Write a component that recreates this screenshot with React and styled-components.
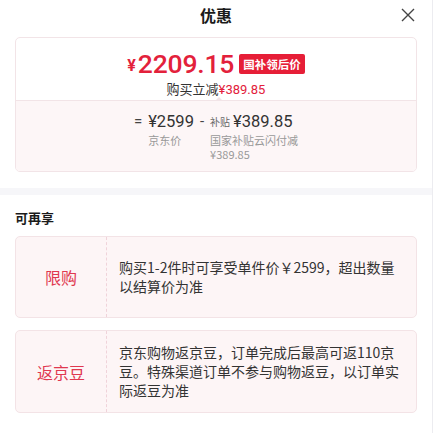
import React from 'react'
import styled, { createGlobalStyle } from 'styled-components'

const Global = createGlobalStyle`
  body {
    margin: 0;
    background: #fff;
    font-family: "Noto Sans CJK SC", "Noto Sans", sans-serif;
    color: #333;
  }
`

const Page = styled.div`
  width: 432px;
  height: 433px;
  border-right: 1px solid #ececf0;
  overflow: hidden;
`

const Header = styled.div`
  height: 30px;
  display: flex;
  align-items: center;
  justify-content: center;
  position: relative;
  font-size: 16px;
  font-weight: 700;
  color: #1a1a1a;
`

const Close = styled.div`
  position: absolute;
  right: 17px;
  top: 8px;
  width: 14px;
  height: 14px;
  display: flex;
`

const PriceCard = styled.div`
  margin: 7px 15px 0;
  border: 1px solid #f2e4e7;
  border-radius: 5px;
  overflow: hidden;
`

const Top = styled.div`
  height: 63px;
  display: flex;
  flex-direction: column;
  align-items: center;
  padding-top: 10px;
  box-sizing: border-box;
  border-bottom: 1px solid #f2e4e7;
  position: relative;
  &::after {
    content: '';
    position: absolute;
    left: 199px;
    bottom: -1px;
    width: 0;
    height: 0;
    border-left: 4px solid transparent;
    border-right: 4px solid transparent;
    border-bottom: 4px solid #f2e4e7;
  }
`

const PriceRow = styled.div`
  display: flex;
  align-items: center;
  height: 30px;
`

const Yen = styled.span`
  font-family: Roboto, sans-serif;
  font-weight: 700;
  font-size: 16px;
  color: #e3213b;
  margin-right: 2px;
  margin-top: 4px;
`

const Big = styled.span`
  font-family: Roboto, sans-serif;
  font-weight: 500;
  font-size: 26.5px;
  color: #e3213b;
  letter-spacing: -0.2px;
`

const Badge = styled.span`
  margin-left: 5px;
  height: 20px;
  padding: 0 4px;
  background: #e61e37;
  color: #fff;
  font-size: 11.5px;
  font-weight: 700;
  border-radius: 2px;
  display: flex;
  align-items: center;
  margin-top: 1px;
`

const Cut = styled.div`
  font-size: 13px;
  line-height: 20px;
  color: #333;
  margin-top: 1px;
  b {
    font-weight: 400;
    font-family: Roboto, sans-serif;
    color: #e3213b;
  }
`

const Bottom = styled.div`
  background: #fdf6f7;
  height: 70px;
  display: flex;
  justify-content: center;
  padding-top: 10px;
  box-sizing: border-box;
  padding-right: 4px;
`

const Op = styled.span`
  font-family: Roboto, sans-serif;
  font-size: 15px;
  color: #444;
  line-height: 21px;
  margin: 0 6px;
`

const Col = styled.div`
  display: flex;
  flex-direction: column;
`

const Amount = styled.div`
  font-family: Roboto, sans-serif;
  font-size: 16.5px;
  color: #333;
  line-height: 21px;
  display: flex;
  align-items: center;
  small {
    font-family: "Noto Sans CJK SC", sans-serif;
    font-size: 10px;
    color: #666;
    margin-right: 3px;
  }
`

const Label = styled.div`
  font-size: 11px;
  line-height: 14px;
  color: #999;
  margin-top: 1px;
  padding-left: ${p => p.$indent || 0}px;
  width: ${p => p.$w || 'auto'};
`

const Band = styled.div`
  height: 7px;
  background: #f6f6f9;
  margin-top: 16px;
`

const Section = styled.div`
  padding: 0 15px;
`

const SectionTitle = styled.div`
  font-size: 13px;
  font-weight: 700;
  color: #1a1a1a;
  height: 41px;
  line-height: 45px;
`

const Perk = styled.div`
  display: flex;
  min-height: 82px;
  background: #fdf5f6;
  border: 1px solid #f3e3e6;
  border-radius: 5px;
  box-sizing: border-box;
  margin-bottom: 12px;
`

const PerkName = styled.div`
  width: 90px;
  flex-shrink: 0;
  border-right: 1px dashed #f0d3da;
  display: flex;
  align-items: center;
  justify-content: center;
  font-size: 16px;
  color: #e0384f;
`

const PerkText = styled.div`
  flex: 1;
  display: flex;
  align-items: center;
  padding: 12px 10px 12px 12px;
  font-size: 14px;
  line-height: 19px;
  color: #333;
`

const perks = [
  { name: '限购', text: '购买1-2件时可享受单件价￥2599，超出数量以结算价为准' },
  { name: '返京豆', text: '京东购物返京豆，订单完成后最高可返110京豆。特殊渠道订单不参与购物返豆，以订单实际返豆为准' },
]

export default function App() {
  return (
    <Page>
      <Global />
      <Header>
        优惠
        <Close>
          <svg width="14" height="14" viewBox="0 0 14 14">
            <path d="M1 1L13 13M13 1L1 13" stroke="#444" strokeWidth="1.4" fill="none" />
          </svg>
        </Close>
      </Header>

      <PriceCard>
        <Top>
          <PriceRow>
            <Yen>¥</Yen>
            <Big>2209.15</Big>
            <Badge>国补领后价</Badge>
          </PriceRow>
          <Cut>购买立减<b>¥389.85</b></Cut>
        </Top>
        <Bottom>
          <Op>=</Op>
          <Col>
            <Amount>¥2599</Amount>
            <Label $indent={-2}>京东价</Label>
          </Col>
          <Op>-</Op>
          <Col>
            <Amount><small>补贴</small>¥389.85</Amount>
            <Label $w="90px">国家补贴云闪付减¥389.85</Label>
          </Col>
        </Bottom>
      </PriceCard>

      <Band />

      <Section>
        <SectionTitle>可再享</SectionTitle>
        {perks.map(p => (
          <Perk key={p.name}>
            <PerkName>{p.name}</PerkName>
            <PerkText>{p.text}</PerkText>
          </Perk>
        ))}
      </Section>
    </Page>
  )
}
